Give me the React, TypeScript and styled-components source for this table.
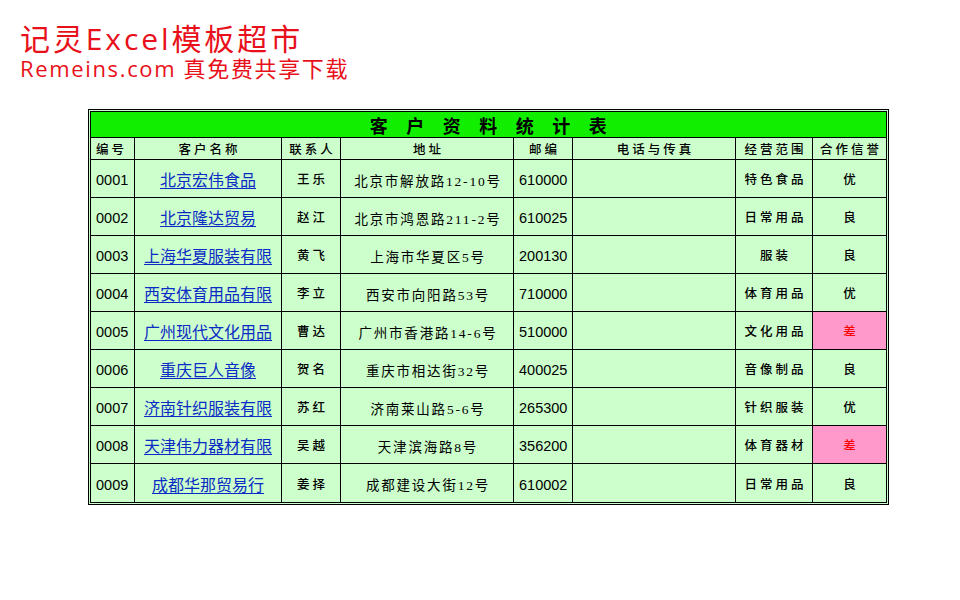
import React from "react";
import styled, { createGlobalStyle, css } from "styled-components";

const Global = createGlobalStyle`
  html, body { margin: 0; padding: 0; background: #ffffff; }
  body { font-family: "Noto Sans CJK SC", "Noto Sans", sans-serif; }
`;

const Page = styled.div`
  width: 960px;
  height: 600px;
  display: flex;
  flex-direction: column;
  padding: 24px 0 0 20px;
  box-sizing: border-box;
`;

const Brand = styled.div`
  display: flex;
  flex-direction: column;
  gap: 1px;
  color: #e8101a;
`;

const BrandTitle = styled.div`
  font-family: "Open Sans", "Noto Sans CJK SC", sans-serif;
  font-size: 30px;
  line-height: 30px;
  letter-spacing: 2.9px;
  white-space: nowrap;
`;

const BrandSub = styled.div`
  font-family: "Open Sans", "Noto Sans CJK SC", sans-serif;
  font-size: 22px;
  line-height: 27px;
  letter-spacing: 1.65px;
  white-space: nowrap;
`;

const Sheet = styled.div`
  margin: 27px 0 0 68px;
  width: 801px;
  box-sizing: border-box;
  border: 3px double #000;
  display: grid;
  grid-template-columns: 44px 147px 59px 173px 59px 163px 77px 73px;
  grid-template-rows: 26px 22px repeat(9, 38px);
  background: #ccffcc;
`;

const TitleCell = styled.div`
  grid-column: 1 / -1;
  background: #11ee00;
  border-bottom: 1px solid #000;
  display: flex;
  align-items: center;
  justify-content: center;
  font-family: "Noto Sans CJK SC", sans-serif;
  font-weight: 700;
  font-size: 18px;
  letter-spacing: 18.5px;
  padding-left: 18px;
  color: #000;
`;

type CellProps = { $align?: "left" | "center"; $lastCol?: boolean; $lastRow?: boolean; $pink?: boolean };

const cellBase = css<CellProps>`
  box-sizing: border-box;
  display: flex;
  align-items: center;
  justify-content: ${(p) => (p.$align === "left" ? "flex-start" : "center")};
  padding-left: ${(p) => (p.$align === "left" ? "5px" : "0")};
  border-right: ${(p) => (p.$lastCol ? "none" : "1px solid #000")};
  border-bottom: ${(p) => (p.$lastRow ? "none" : "1px solid #000")};
  background: ${(p) => (p.$pink ? "#ff99cc" : "#ccffcc")};
  white-space: nowrap;
  overflow: hidden;
  color: #000;
`;

const HeadCell = styled.div<CellProps>`
  ${cellBase};
  font-family: "Noto Sans CJK SC", sans-serif;
  font-size: 12.5px;
  font-weight: 500;
  letter-spacing: 3px;
  text-indent: ${(p) => (p.$align === "left" ? "0" : "3px")};
`;

const NumCell = styled.div<CellProps>`
  ${cellBase};
  font-family: "Liberation Sans", "Noto Sans CJK SC", sans-serif;
  font-size: 14.5px;
  padding-top: 3px;
`;

const LinkCell = styled.div<CellProps>`
  ${cellBase};
  padding-top: 1px;
`;

const CompanyLink = styled.a`
  font-family: "Noto Sans CJK SC", sans-serif;
  font-size: 16px;
  color: #0b2cc4;
  text-decoration: underline;
  text-underline-offset: 2px;
  cursor: pointer;
`;

const SmallCell = styled.div<CellProps & { $red?: boolean }>`
  ${cellBase};
  font-family: "Noto Sans CJK SC", sans-serif;
  font-size: 12.5px;
  font-weight: 500;
  letter-spacing: 3px;
  text-indent: 3px;
  color: ${(p) => (p.$red ? "#ff0000" : "#000")};
`;

const AddrCell = styled.div<CellProps>`
  ${cellBase};
  font-family: "Liberation Serif", "Noto Sans CJK SC", serif;
  font-size: 13.5px;
  letter-spacing: 1.8px;
  text-indent: 2px;
  padding-top: 2px;
`;

const headers: { label: string; align: "left" | "center" }[] = [
  { label: "编号", align: "left" },
  { label: "客户名称", align: "center" },
  { label: "联系人", align: "center" },
  { label: "地址", align: "center" },
  { label: "邮编", align: "center" },
  { label: "电话与传真", align: "center" },
  { label: "经营范围", align: "center" },
  { label: "合作信誉", align: "center" },
];

const rows: string[][] = [
  ["0001", "北京宏伟食品", "王乐", "北京市解放路12-10号", "610000", "特色食品", "优"],
  ["0002", "北京隆达贸易", "赵江", "北京市鸿恩路211-2号", "610025", "日常用品", "良"],
  ["0003", "上海华夏服装有限", "黄飞", "上海市华夏区5号", "200130", "服装", "良"],
  ["0004", "西安体育用品有限", "李立", "西安市向阳路53号", "710000", "体育用品", "优"],
  ["0005", "广州现代文化用品", "曹达", "广州市香港路14-6号", "510000", "文化用品", "差"],
  ["0006", "重庆巨人音像", "贺名", "重庆市相达街32号", "400025", "音像制品", "良"],
  ["0007", "济南针织服装有限", "苏红", "济南莱山路5-6号", "265300", "针织服装", "优"],
  ["0008", "天津伟力器材有限", "吴越", "天津滨海路8号", "356200", "体育器材", "差"],
  ["0009", "成都华那贸易行", "姜择", "成都建设大街12号", "610002", "日常用品", "良"],
];

export default function App() {
  return (
    <>
      <Global />
      <Page>
        <Brand>
          <BrandTitle>记灵Excel模板超市</BrandTitle>
          <BrandSub>Remeins.com 真免费共享下载</BrandSub>
        </Brand>
        <Sheet>
          <TitleCell>客户资料统计表</TitleCell>
          {headers.map((h, i) => (
            <HeadCell key={h.label} $align={h.align} $lastCol={i === headers.length - 1}>
              {h.label}
            </HeadCell>
          ))}
          {rows.map((r, ri) => {
            const last = ri === rows.length - 1;
            const bad = r[6] === "差";
            return (
              <React.Fragment key={r[0]}>
                <NumCell $align="left" $lastRow={last}>{r[0]}</NumCell>
                <LinkCell $lastRow={last}>
                  <CompanyLink>{r[1]}</CompanyLink>
                </LinkCell>
                <SmallCell $lastRow={last}>{r[2]}</SmallCell>
                <AddrCell $lastRow={last}>{r[3]}</AddrCell>
                <NumCell $align="left" $lastRow={last}>{r[4]}</NumCell>
                <NumCell $lastRow={last}></NumCell>
                <SmallCell $lastRow={last}>{r[5]}</SmallCell>
                <SmallCell $lastRow={last} $lastCol $pink={bad} $red={bad}>
                  {r[6]}
                </SmallCell>
              </React.Fragment>
            );
          })}
        </Sheet>
      </Page>
    </>
  );
}
